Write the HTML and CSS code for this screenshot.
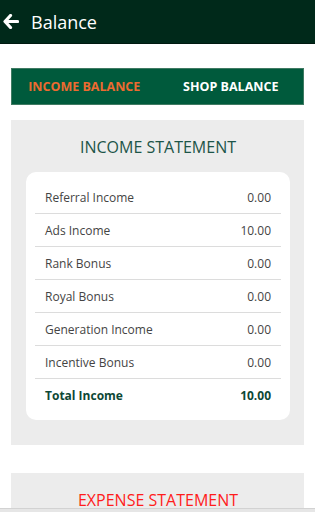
FILE: index.html
```html
<!DOCTYPE html>
<html>
<head>
<meta charset="utf-8">
<link rel="stylesheet" href="styles.css">
</head>
<body>
<header class="appbar">
  <svg class="back" width="16" height="15" viewBox="0 0 16 15">
    <path d="M7.5 1.5 L2 7.5 L7.5 13.5 M2.5 7.5 H14.5" fill="none" stroke="#fff" stroke-width="3.2" stroke-linecap="round" stroke-linejoin="round"/>
  </svg>
  <span class="title">Balance</span>
</header>
<nav class="tabs">
  <span class="tab active">INCOME BALANCE</span>
  <span class="tab">SHOP BALANCE</span>
</nav>
<section class="panel">
  <h2 class="panel-title income">INCOME STATEMENT</h2>
  <div class="card">
    <div class="row"><span>Referral Income</span><span>0.00</span></div>
    <div class="row"><span>Ads Income</span><span>10.00</span></div>
    <div class="row"><span>Rank Bonus</span><span>0.00</span></div>
    <div class="row"><span>Royal Bonus</span><span>0.00</span></div>
    <div class="row"><span>Generation Income</span><span>0.00</span></div>
    <div class="row"><span>Incentive Bonus</span><span>0.00</span></div>
    <div class="row total"><span>Total Income</span><span>10.00</span></div>
  </div>
</section>
<section class="panel">
  <h2 class="panel-title expense">EXPENSE STATEMENT</h2>
</section>
<div class="bottom-edge"></div>
</body>
</html>
```
FILE: styles.css
```css
html, body {
  margin: 0;
  padding: 0;
  background: #fff;
  font-family: "Open Sans", "Noto Sans", sans-serif;
}
.appbar {
  background: #00291a;
  border-bottom: 1px solid #001a10;
  display: flex;
  align-items: center;
  padding-left: 3px;
  box-sizing: border-box;
  height: 44px;
}
.back {
  margin-right: 12px;
  margin-top: -1px;
}
.title {
  color: #fff;
  font-size: 18px;
  line-height: 24px;
}
.tabs {
  margin: 24px 11px 0;
  height: 37px;
  box-sizing: border-box;
  background: #005a3c;
  border: 1px solid #3f7a62;
  display: flex;
  align-items: center;
}
.tab {
  flex: 1;
  text-align: center;
  font-size: 12.5px;
  font-weight: 700;
  color: #fff;
  padding-left: 2px;
}
.tab.active {
  color: #ee6a30;
  padding-left: 0;
}
.panel {
  margin: 15px 11px 0;
  background: #ececec;
  padding: 16px 14px 25px 15px;
}
.panel + .panel {
  margin-top: 28px;
  padding-bottom: 40px;
}
.panel-title {
  margin: 0 0 14px;
  text-align: center;
  font-weight: 400;
  font-size: 16px;
  line-height: 22px;
}
.income { color: #1d5548; }
.expense { color: #ff1c1c; }
.card {
  background: #fff;
  border-radius: 10px;
  padding: 9px 9px 8px;
}
.row {
  display: flex;
  justify-content: space-between;
  height: 33px;
  align-items: center;
  padding: 0 10px;
  font-size: 12px;
  color: #444;
  border-bottom: 1px solid #dcdcdc;
  box-sizing: border-box;
}
.row:last-child {
  border-bottom: none;
}
.row.total {
  font-weight: 700;
  color: #0d4735;
}
.bottom-edge {
  position: fixed;
  left: 0;
  right: 0;
  bottom: 0;
  height: 3px;
  background: #e6e6e6;
  border-top: 1px solid #d2d2d2;
}
```
